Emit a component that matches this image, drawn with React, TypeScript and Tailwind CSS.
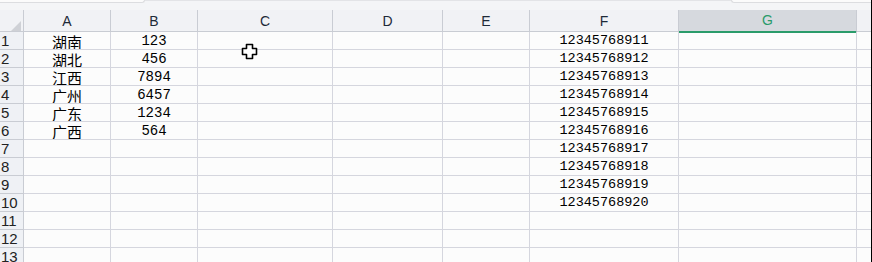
import React from "react";

const cols = [
  { key: "", w: 24 },
  { key: "A", w: 87 },
  { key: "B", w: 87 },
  { key: "C", w: 135 },
  { key: "D", w: 110 },
  { key: "E", w: 87 },
  { key: "F", w: 149 },
  { key: "G", w: 178 },
];

const cityData = ["湖南", "湖北", "江西", "广州", "广东", "广西"];
const numData = ["123", "456", "7894", "6457", "1234", "564"];

const rows = Array.from({ length: 13 }, (_, i) => ({
  n: i + 1,
  a: cityData[i] ?? "",
  b: numData[i] ?? "",
  f: i < 10 ? `123457689${String(11 + i)}` : "",
}));

const grid =
  "grid grid-cols-[24px_87px_87px_135px_110px_87px_149px_178px_14px]";

export default function App() {
  return (
    <div className="relative w-[872px] h-[262px] overflow-hidden bg-[#fcfcfc] border-r border-black font-['Liberation_Sans',sans-serif]">
      {/* toolbar remnant */}
      <div className="h-[10px] bg-[#f4f5f7] border-t border-[#e3e4e7] flex justify-between">
        <div className="w-[145px] h-[3px] -mt-px bg-[#fbfbfb] border-b border-r border-[#dcdde0] rounded-br-[4px]" />
        <div className="w-[140px] h-[3px] -mt-px bg-[#fbfbfb] border-b border-l border-[#dcdde0] rounded-bl-[4px]" />
      </div>

      {/* column header */}
      <div className={`${grid} h-[22px] bg-[#f1f2f5] border-b border-[#c9ccd3]`}>
        <div className="relative border-r border-[#c9ccd3]">
          <div className="absolute right-[2px] bottom-[2px] w-0 h-0 border-l-[10px] border-l-transparent border-b-[10px] border-b-[#cfd1d6]" />
        </div>
        {cols.slice(1).map((c) =>
          c.key === "G" ? (
            <div
              key={c.key}
              className="flex items-center justify-center bg-[#d6d9de] border-b-2 border-[#2a9b6a] border-r border-r-[#c9ccd3] text-[14px] text-[#2a9b6a]"
            >
              {c.key}
            </div>
          ) : (
            <div
              key={c.key}
              className="flex items-center justify-center border-r border-[#c9ccd3] text-[14px] text-[#1e2a38]"
            >
              {c.key}
            </div>
          )
        )}
        <div />
      </div>

      {/* body */}
      {rows.map((r) => (
        <div key={r.n} className={`${grid} h-[18px]`}>
          <div className="flex items-center pl-[1px] bg-[#eff1f5] border-r border-b border-[#c9ccd3] text-[15px] leading-none text-[#222]">
            {r.n}
          </div>
          <div className="flex items-center justify-center overflow-hidden pt-[1px] border-r border-b border-[#d5d6de] text-[15px] leading-none text-black font-['Noto_Sans_CJK_SC',sans-serif]">
            {r.a}
          </div>
          <div className="flex items-center justify-center pt-[1px] border-r border-b border-[#d5d6de] text-[14px] leading-none text-black font-['Liberation_Mono',monospace]">
            {r.b}
          </div>
          <div className="border-r border-b border-[#d5d6de]" />
          <div className="border-r border-b border-[#d5d6de]" />
          <div className="border-r border-b border-[#d5d6de]" />
          <div className="flex items-center justify-center pt-[1px] border-r border-b border-[#d5d6de] text-[13.5px] leading-none text-black font-['Liberation_Mono',monospace]">
            {r.f}
          </div>
          <div className="border-r border-b border-[#d5d6de]" />
          <div className="border-b border-[#d5d6de]" />
        </div>
      ))}

      {/* mouse cursor */}
      <svg
        className="absolute left-[241px] top-[43px]"
        width="17"
        height="17"
        viewBox="0 0 17 17"
      >
        <path
          d="M5.5 1.5h6v4h4v6h-4v4h-6v-4h-4v-6h4z"
          fill="#fff"
          stroke="#000"
          strokeWidth="1.6"
          strokeLinejoin="round"
        />
      </svg>
    </div>
  );
}
